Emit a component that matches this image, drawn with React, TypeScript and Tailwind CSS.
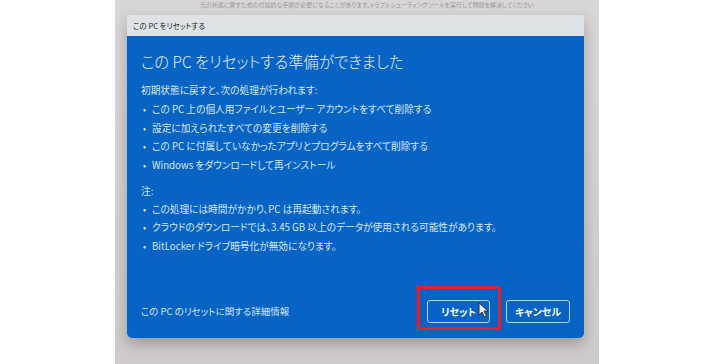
import React from "react";

const font = { fontFamily: '"Noto Sans CJK JP", "Noto Sans", sans-serif' };

const removals = [
  "この PC 上の個人用ファイルとユーザー アカウントをすべて削除する",
  "設定に加えられたすべての変更を削除する",
  "この PC に付属していなかったアプリとプログラムをすべて削除する",
  "Windows をダウンロードして再インストール",
];

const notes = [
  "この処理には時間がかかり、PC は再起動されます。",
  "クラウドのダウンロードでは、3.45 GB 以上のデータが使用される可能性があります。",
  "BitLocker ドライブ暗号化が無効になります。",
];

function Bullet({ text }: { text: string }) {
  return (
    <li className="flex h-[18.5px] items-center">
      <span className="w-[11px] pl-[2px] text-[9px]">•</span>
      <span>{text}</span>
    </li>
  );
}

export default function App() {
  return (
    <div
      className="flex h-[364px] w-[715px] overflow-hidden bg-white [font-feature-settings:'palt']"
      style={font}
    >
      <div className="w-[115px] shrink-0" />
      <div className="relative w-[484px] shrink-0 bg-gradient-to-b from-[#d9d6d6] to-[#cfcbcb]">
        {/* faint text of the window behind */}
        <div className="h-[15px] pt-[1px] pl-[85px]">
          <div className="whitespace-nowrap text-[6px] leading-[8px] text-[#9a9797]">
            元の状態に戻すための付加的な手順が必要になることがあります。トラブルシューティングツールを実行して問題を解決してください
          </div>
        </div>

        <div className="ml-[12px] w-[457px] rounded-b-[5px] shadow-[0_6px_14px_rgba(0,0,0,0.25)]">
          <div className="flex h-[21px] items-center rounded-t-[3px] bg-[#dfe2e6] pl-[6px] text-[7.5px] text-[#222]">
            この PC をリセットする
          </div>
          <div className="flex h-[302px] flex-col rounded-b-[5px] bg-[#0764c4] px-[14px] pt-[13px] pb-[15px] text-[#d8e6f6]">
            <h1 className="text-[15.4px] leading-[24px] font-light text-[#e4eefa]">
              この PC をリセットする準備ができました
            </h1>
            <p className="mt-[8px] h-[18.5px] text-[9.7px] leading-[18.5px]">初期状態に戻すと、次の処理が行われます:</p>
            <ul className="mt-[1px] text-[9.7px]">
              {removals.map((t) => (
                <Bullet key={t} text={t} />
              ))}
            </ul>
            <p className="mt-[7px] h-[18.5px] text-[9.7px] leading-[18.5px]">注:</p>
            <ul className="text-[9.7px]">
              {notes.map((t) => (
                <Bullet key={t} text={t} />
              ))}
            </ul>

            <div className="mt-auto flex items-center justify-between">
              <span className="text-[9.5px] text-[#d3e3f6]">この PC のリセットに関する詳細情報</span>
              <div className="flex gap-[16px]">
                <button className="h-[23px] w-[63px] rounded-[3px] border-[1.5px] border-[#b3d3f2] text-[10px] font-bold text-white">
                  リセット
                </button>
                <button className="h-[23px] w-[64px] rounded-[3px] border-[1.5px] border-[#b3d3f2] text-[10px] font-bold text-white">
                  キャンセル
                </button>
              </div>
            </div>
          </div>
        </div>

        {/* red highlight around reset button */}
        <div className="absolute left-[302px] top-[286px] h-[44px] w-[84px] rounded-[2px] border-[3px] border-[#e3202c]" />

        {/* mouse cursor */}
        <svg className="absolute left-[363px] top-[302px]" width="11" height="16" viewBox="0 0 11 16">
          <path d="M1 1 L1 13 L4 10 L6.5 15 L8.5 14 L6 9 L10 9 Z" fill="#e8e8e8" stroke="#333" strokeWidth="1" strokeLinejoin="round" />
        </svg>
      </div>
      <div className="flex-1" />
    </div>
  );
}
